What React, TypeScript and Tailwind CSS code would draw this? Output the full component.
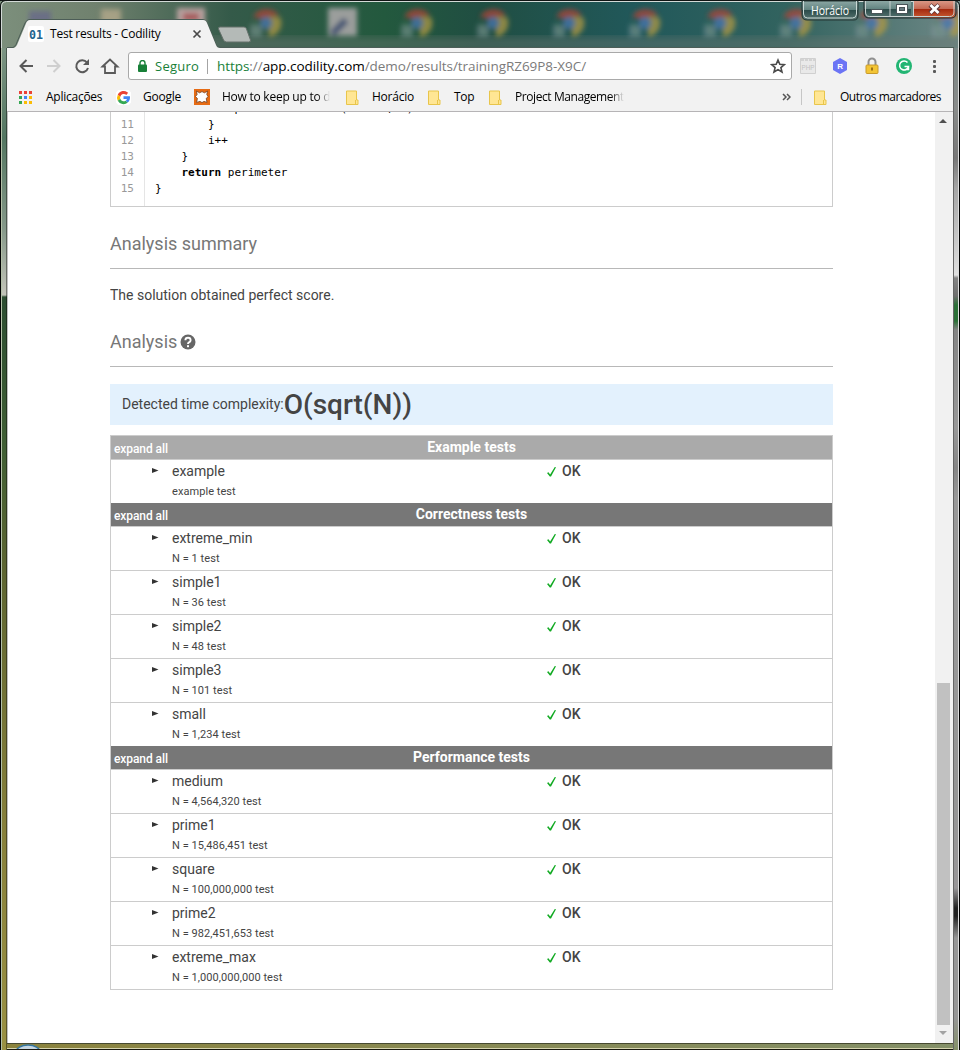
import React from 'react';

type Test = { name: string; info: string };
type Group = { title: string; tone: string; tests: Test[] };

const groups: Group[] = [
  { title: 'Example tests', tone: 'bg-[#aaaaaa]', tests: [{ name: 'example', info: 'example test' }] },
  {
    title: 'Correctness tests',
    tone: 'bg-[#777777]',
    tests: [
      { name: 'extreme_min', info: 'N = 1 test' },
      { name: 'simple1', info: 'N = 36 test' },
      { name: 'simple2', info: 'N = 48 test' },
      { name: 'simple3', info: 'N = 101 test' },
      { name: 'small', info: 'N = 1,234 test' },
    ],
  },
  {
    title: 'Performance tests',
    tone: 'bg-[#777777]',
    tests: [
      { name: 'medium', info: 'N = 4,564,320 test' },
      { name: 'prime1', info: 'N = 15,486,451 test' },
      { name: 'square', info: 'N = 100,000,000 test' },
      { name: 'prime2', info: 'N = 982,451,653 test' },
      { name: 'extreme_max', info: 'N = 1,000,000,000 test' },
    ],
  },
];

const code: [number, React.ReactNode][] = [
  [10, '            perimeter = calc(number, i)'],
  [11, '        }'],
  [12, '        i++'],
  [13, '    }'],
  [14, <>{'    '}<b>return</b> perimeter</>],
  [15, '}'],
];

function Wallpaper() {
  const chromes = [266, 417, 493, 569, 645, 720, 796, 872, 948];
  return (
    <svg className="absolute inset-0" width="960" height="48" viewBox="0 0 960 48">
      <defs>
        <filter id="soft" x="-50%" y="-50%" width="200%" height="200%"><feGaussianBlur stdDeviation="2.8" /></filter>
        <filter id="wide"><feGaussianBlur stdDeviation="5" /></filter>
        <linearGradient id="desk" x1="0" x2="1">
          <stop offset="0" stopColor="#7c8f7c" /><stop offset=".1" stopColor="#70816e" />
          <stop offset=".24" stopColor="#345a49" /><stop offset=".4" stopColor="#23593e" />
          <stop offset=".5" stopColor="#204e42" /><stop offset=".66" stopColor="#21585a" />
          <stop offset=".82" stopColor="#32635f" /><stop offset="1" stopColor="#6e8886" />
        </linearGradient>
      </defs>
      <rect width="960" height="48" fill="url(#desk)" />
      <rect x="180" y="37" width="780" height="14" fill="#6b7771" opacity=".5" filter="url(#wide)" />
      <g filter="url(#soft)">
        <rect x="29" y="11" width="22" height="20" fill="#625d90" opacity=".6" />
        <rect x="101" y="9" width="20" height="22" fill="#b5aa8c" opacity=".8" />
        <rect x="177" y="8" width="28" height="24" fill="#b9a3a0" />
        <rect x="183" y="13" width="16" height="8" fill="#a65b5b" />
        <rect x="328" y="8" width="29" height="28" fill="#9b9e9c" />
        <path d="M332 34l14-14" stroke="#4a5874" strokeWidth="7" />
        {chromes.map((x) => (
          <g key={x} opacity=".75">
            <path d={`M${x - 13} 17a15 14 0 0 1 26-2L${x} 20z`} fill="#ad4436" />
            <path d={`M${x + 2} 17h12a14 14 0 0 1-11 20z`} fill="#b09a43" />
            <path d={`M${x - 13} 20l8 15l-7 1z`} fill="#397b50" />
            <rect x={x - 16} y="25" width="12" height="12" fill="#8f9da5" opacity=".6" />
            <circle cx={x} cy="23" r="6" fill="#4977b2" />
          </g>
        ))}
      </g>
    </svg>
  );
}

function WindowButtons() {
  return (
    <svg className="absolute left-[800px] top-0" width="160" height="24" viewBox="0 0 160 24">
      <defs>
        <linearGradient id="glass" x2="0" y2="1"><stop stopColor="#8ba6a3" /><stop offset=".48" stopColor="#618380" /><stop offset=".5" stopColor="#2d4d4b" /><stop offset="1" stopColor="#577471" /></linearGradient>
        <linearGradient id="close" x2="0" y2="1"><stop stopColor="#d99785" /><stop offset=".48" stopColor="#c46751" /><stop offset=".5" stopColor="#a52b10" /><stop offset="1" stopColor="#c85c34" /></linearGradient>
      </defs>
      <path d="M2 1v14q0 5 5 5h47q4 0 4-5V1z" fill="url(#glass)" stroke="#243634" />
      <path d="M3.500 1v13q0 4 4 4h45q4 0 4-4V1" fill="none" stroke="#c9d8d5" />
      <path d="M64 1v12q0 5 5 5h42V1z" fill="url(#glass)" />
      <path d="M114 1v17h36q5 0 5-5V1z" fill="url(#close)" />
      <path d="M64 1v12q0 5 5 5h82q5 0 5-5V1" fill="none" stroke="#202d2e" />
      <path d="M65.500 1v11q0 4.500 4 4.500h80q4.500 0 4.500-4.500V1M90 1v16M113.500 1v16" fill="none" stroke="#c8d1d0" />
      <rect x="71.500" y="9.500" width="11" height="4" fill="#fff" stroke="#4a5559" />
      <rect x="96.500" y="4.500" width="11" height="9" fill="#fff" stroke="#4a5559" />
      <rect x="99.500" y="7.500" width="5" height="3" fill="#687b80" stroke="#4a5559" />
      <path d="M130 5l9 8M139 5l-9 8" stroke="#5b3538" strokeWidth="4.500" />
      <path d="M130.500 5l8 8M138.500 5l-8 8" stroke="#fff" strokeWidth="2.800" />
      <text x="11" y="15" fill="#fff" fontFamily="Open Sans" fontSize="12" textLength="38" lengthAdjust="spacingAndGlyphs">Horácio</text>
    </svg>
  );
}

function TabStrip() {
  return (
    <header className="relative h-12 shrink-0">
      <Wallpaper />
      <svg className="absolute inset-0" width="960" height="48" viewBox="0 0 960 48">
        <path d="M0 0h960v1H0z" fill="#101514" /><path d="M.5 48V6q0-5 5-5.500H954q5.500.5 5.500 5.500v42" fill="none" stroke="#101514" /><path d="M1.500 48V7q0-5 5-5.500H953q5 .5 5.500 5V48" fill="none" stroke="#d3dad7" />
        <path d="M7 47.500h6q2-1 3-3L25 23q2-3.500 4-3.500h174q3 0 4 3l9 22q1.500 3 4 3h734" fill="none" stroke="#4c5d57" />
        <path d="M7 48h7q2-1 3-3l9-21.500q1-3.500 4-3.500h173q3 0 4 3l9 22q1 3 4 3z" fill="#f2f2f2" />
        <path d="M220 27h24q2 0 2.500 2l4 11q.5 2-2 2h-22q-2 0-3-2l-5-11q-.5-2 1.500-2z" fill="#b4bab7" stroke="#65716b" />
      </svg>
      <div className="relative flex h-12 items-start pt-[26px] pl-[28px] font-['Open_Sans',sans-serif] text-[12px]">
        <svg width="16" height="16" viewBox="0 0 16 16" className="shrink-0"><rect width="16" height="16" rx="2" fill="#fff" /><text x="1" y="13" fontSize="13" fontFamily="DejaVu Sans Mono" fontWeight="bold" fill="#21638d" textLength="14" lengthAdjust="spacingAndGlyphs">01</text></svg>
        <span className="ml-[6px] w-[136px] text-[12px] leading-4 tracking-[-0.23px] whitespace-nowrap text-black">Test results - Codility</span>
        <svg className="ml-[6px] mt-[3px]" width="10" height="10" viewBox="0 0 10 10"><path d="M1.500 1.500l7 7M8.500 1.500l-7 7" stroke="#4a4a4a" strokeWidth="1.700" /></svg>
      </div>
      <WindowButtons />
    </header>
  );
}

const Folder = () => (
  <svg className="shrink-0" width="13" height="15" viewBox="0 0 13 15"><path d="M.5 1h10v9h1.500v4.500H.5z" fill="#ffe694" stroke="#e8c54b" /><path d="M9.500 14V10" stroke="#e8c54b" /></svg>
);

const GoogleMark = () => (
  <svg width="15" height="15" viewBox="3 3 42 42" className="shrink-0">
    <circle cx="24" cy="24" r="25" fill="#fff" />
    <path fill="#ea4335" d="M8 16a18 18 0 0 1 29-5l-5 6a10 10 0 0 0-17 5z" /><path fill="#fbbc05" d="M8 16l7 5.500a10 10 0 0 0 0 6L8 33a19 19 0 0 1 0-17z" />
    <path fill="#34a853" d="M8 33l7-5.500a10 10 0 0 0 15 5.500l6 5A18 18 0 0 1 8 33z" /><path fill="#4285f4" d="M24 20.500h18q1.500 11-6 17.500l-6-5q3-2 3.500-5H24z" />
  </svg>
);

function Toolbar() {
  return (
    <div className="flex h-[36px] shrink-0 items-center bg-[#f2f2f2] font-['Open_Sans',sans-serif]">
      <svg className="shrink-0" width="120" height="36" viewBox="0 0 120 36" fill="none" strokeWidth="2">
        <path d="M26 18H13.500M19.500 12l-6 6 6 6" stroke="#5a5a5a" />
        <path d="M40 18h12.500M46.500 12l6 6-6 6" stroke="#cfcfcf" />
        <path d="M80 14.500a6 6 0 1 0 1 5.500" stroke="#5a5a5a" /><path d="M82 11v6h-6z" fill="#5a5a5a" />
        <path d="M95.500 18.500L103 11.500l7.500 7H108V25H98v-6.500z" stroke="#5a5a5a" strokeWidth="1.800" />
      </svg>
      <div className="ml-px flex h-[28px] w-[664px] shrink-0 items-center rounded-[3px] border border-[#a9a9a9] bg-white">
        <svg className="ml-[9px]" width="9" height="12" viewBox="0 0 9 12"><path d="M2 5V3a2.500 2.500 0 0 1 5 0v2" stroke="#188038" strokeWidth="1.400" fill="none" /><rect y="4.500" width="9" height="7.500" rx="1" fill="#188038" /></svg>
        <span className="ml-[8px] w-[52px] pt-px text-[13px] tracking-[0.25px] text-[#188038]">Seguro</span>
        <span className="mr-[9px] h-[15px] w-px bg-[#a4a4a4]" />
        <span className="w-[550px] text-[13.5px] tracking-[-0.05px] whitespace-nowrap text-[#7b7b7b]"><span className="text-[#188038]">https</span>://<span className="text-black">app.codility.com</span>/demo/results/trainingRZ69P8-X9C/</span>
        <svg className="ml-[3px] shrink-0" width="16" height="16" viewBox="0 0 16 16"><path d="M8 2l1.800 4.200 4.600.4-3.500 3 1.100 4.400L8 11.600 4 14l1.100-4.400-3.500-3 4.600-.4z" fill="none" stroke="#4a4a4a" strokeWidth="1.600" /></svg>
      </div>
      <svg className="ml-[8px] shrink-0" width="145" height="24" viewBox="0 0 145 24">
        <path d="M.5 4.500h15v15H.5z" fill="#e9e9e9" stroke="#d0d0d0" /><path d="M1 6h14" stroke="#bcbcbc" strokeDasharray="3 1" /><text x="1.500" y="16" fontSize="7" fontFamily="Liberation Sans" fill="#c2c2c2" textLength="13" lengthAdjust="spacingAndGlyphs">PHP</text>
        <path d="M40 4l7 4v8l-7 4-7-4V8z" fill="#6b74f5" /><text x="37.200" y="15.200" fontSize="8" fontFamily="Liberation Sans" fontWeight="bold" fill="#fff">R</text>
        <path d="M68.500 12V8a3.500 3.500 0 0 1 7 0v4" fill="none" stroke="#909090" strokeWidth="2" /><rect x="66" y="11" width="12" height="8.500" rx="1" fill="#f3c535" stroke="#c99a2c" /><path d="M72 13.500v3" stroke="#80550b" strokeWidth="1.500" />
        <circle cx="104" cy="12" r="8" fill="#22b573" /><path d="M107.500 8.500a4.500 4.500 0 1 0 1 4h-4M106 15.500h2.500V12" stroke="#fff" strokeWidth="1.500" fill="none" />
        <g fill="#5a5a5a"><rect x="133" y="6" width="3" height="3" rx="1" /><rect x="133" y="11" width="3" height="3" rx="1" /><rect x="133" y="16" width="3" height="3" rx="1" /></g>
      </svg>
    </div>
  );
}

function Bookmarks() {
  const colors = ['#ea4335', '#ea4335', '#ea4335', '#34a853', '#4285f4', '#fbbc05', '#34a853', '#fbbc05', '#fbbc05'];
  return (
    <nav className="flex h-[28px] shrink-0 items-center border-b border-[#b6b4b6] bg-[#f2f2f2] pb-px pl-3 font-['Open_Sans',sans-serif] text-[12px] tracking-[-0.25px] whitespace-nowrap text-black">
      <span className="grid w-[13px] grid-cols-3 gap-[2px]">{colors.map((c, i) => <i key={i} className="size-[3px]" style={{ backgroundColor: c }} />)}</span>
      <span className="ml-[14px] w-[70px]">Aplicações</span>
      <GoogleMark /><span className="ml-[12px] w-[51px]">Google</span>
      <svg className="shrink-0" width="16" height="16" viewBox="0 0 16 16"><rect width="16" height="16" fill="#e66b14" /><path d="M2.500 2l3 1.800L8 2.600l2.500 1.200 3-1.800-.7 3.600 1.400 2-2 1.800.8 4-3-1L8 13.600l-2-1.200-3.400 1 .8-4-2-1.800 1.700-2z" fill="#fff" stroke="#74401f" strokeWidth=".8" /></svg>
      <span className="ml-[12px] w-[108px] overflow-hidden bg-linear-to-r from-black from-88% to-transparent bg-clip-text text-transparent">How to keep up to date</span>
      <span className="ml-[16px] flex"><Folder /></span><span className="ml-[13px] w-[56px]">Horácio</span>
      <Folder /><span className="ml-[13px] w-[35px]">Top</span>
      <Folder /><span className="ml-[13px] w-[109px] overflow-hidden bg-linear-to-r from-black from-88% to-transparent bg-clip-text tracking-[-0.42px] text-transparent">Project Management</span>
      <svg className="ml-[158px] shrink-0" width="9" height="8" viewBox="0 0 9 8"><path d="M1 1l3 3-3 3M5 1l3 3-3 3" fill="none" stroke="#555" strokeWidth="1.500" /></svg>
      <span className="mr-[12px] ml-[10px] h-[16px] w-px bg-[#c6c6c6]" />
      <Folder /><span className="ml-[13px] tracking-[-0.46px]">Outros marcadores</span>
    </nav>
  );
}

function TestTable() {
  return (
    <section className="mt-[10px] border border-[#cccccc]">
      {groups.map((g) => (
        <div key={g.title}>
          <div className={`flex h-[24px] border-b border-[#cccccc] pl-[3px] text-white ${g.tone}`}>
            <span className="w-[80px] pt-[5px] text-[12px] leading-4 font-medium tracking-[-0.08px]">expand all</span>
            <h3 className="w-[555px] pt-[3px] text-center text-[14px] leading-4 font-bold">{g.title}</h3>
          </div>
          {g.tests.map((t) => (
            <div key={t.name} className="flex h-[44px] border-b border-[#cccccc] last:h-[43px] last:border-b-0">
              <svg className="mt-[8px] ml-[41px] shrink-0" width="7" height="5" viewBox="0 0 7 5"><path d="M0 0l6.500 2.500L0 5z" fill="#333" /></svg>
              <div className="ml-[13px] w-[375px]">
                <div className="pt-[3px] text-[14px] leading-4">{t.name}</div>
                <div className="pt-[6px] text-[11px] leading-[14px] tracking-[0.06px]">{t.info}</div>
              </div>
              <svg className="mt-[7px] shrink-0" width="9" height="10" viewBox="0 0 9 10"><path d="M0 6l1.500-.8 1.600 2.300L7.800 0 9 .2 4 9.500H2.800z" fill="#11aa22" /></svg>
              <b className="ml-[6px] pt-[3px] text-[14px] leading-4 font-medium">OK</b>
            </div>
          ))}
        </div>
      ))}
    </section>
  );
}

function Page() {
  return (
    <main className="ml-[102px] h-full w-[723px] overflow-hidden font-[Roboto,sans-serif] text-[#444]">
      <section className="flex h-[95px] items-end overflow-hidden border border-t-0 border-[#cccccc] font-['DejaVu_Sans_Mono',monospace] text-[11px] leading-4 text-black">
        <div className="h-[105px] w-[34px] shrink-0 border-r border-[#e5e5e5] pr-[10px] text-right text-[#999]">{code.map(([n]) => <div key={n}>{n}</div>)}</div>
        <pre className="h-[105px] pl-[10px] font-['DejaVu_Sans_Mono',monospace]">{code.map(([n, t]) => <div key={n}>{t}</div>)}</pre>
      </section>
      <h2 className="mt-[25px] h-[37px] border-b border-[#b8b8b8] text-[18px] leading-6 text-[#777]">Analysis summary</h2>
      <p className="mt-[15px] text-[14px] leading-[22px]">The solution obtained perfect score.</p>
      <h2 className="mt-[24px] flex h-[37px] items-start border-b border-[#b8b8b8] text-[18px] leading-6 text-[#777]">Analysis
        <svg className="mt-[4px] ml-[3px]" width="16" height="16" viewBox="0 0 16 16"><circle cx="8" cy="8" r="7.500" fill="#666" /><path d="M5.400 6.200Q5.400 3.800 8 3.800t2.600 2.400Q10.600 7.600 9 8.400 8 9 8 10" fill="none" stroke="#fff" strokeWidth="1.900" /><rect x="7" y="11.200" width="2" height="2" fill="#fff" /></svg>
      </h2>
      <div className="mt-[17px] flex h-[41px] items-center bg-[#e3f1fd] pl-3 text-[14px]">Detected time complexity:<span className="text-[28px] font-medium">O(sqrt(N))</span></div>
      <TestTable />
    </main>
  );
}

export default function App() {
  return (
    <div className="relative flex h-[1050px] w-[960px] flex-col overflow-hidden bg-[#101514]">
      <TabStrip />
      <div className="flex h-[1002px]">
        <div className="w-[7px] shrink-0 border-l border-black bg-[linear-gradient(#7c9483_0px,#537661_90px,#859889_180px,#c3c4b9_247px,#2c4d31_249px,#405f34_400px,#5d6531_520px,#87803b_780px,#9a9143_1002px)] shadow-[inset_1px_0_#b3c0a8,inset_-1px_0_#0006]" />
        <div className="flex w-[946px] flex-col">
          <Toolbar />
          <Bookmarks />
          <div className="flex h-[931px] border-l border-[#c0c0c0] bg-white">
            <div className="w-[927px] overflow-hidden"><Page /></div>
            <aside className="flex w-[18px] flex-col items-center bg-[#f1f1f1] pr-[2px]">
              <svg className="mt-[7px]" width="8" height="4"><path d="M0 4l4-4 4 4z" fill="#505050" /></svg>
              <div className="mt-[560px] h-[342px] w-[13px] bg-[#c1c1c1]" />
              <svg className="mt-[6px]" width="8" height="4"><path d="M0 0h8L4 4z" fill="#a3a3a3" /></svg>
            </aside>
          </div>
          <footer className="flex h-[7px] items-end border-y border-t-[#474a31] border-b-[#1b1a10] bg-linear-to-r from-[#8b833d] to-[#849068] pl-[8px] shadow-[inset_0_-1px_#d6d5b0]">
            <svg width="26" height="5" viewBox="0 0 26 5"><ellipse cx="13" cy="8" rx="12" ry="7" fill="#c6d7e2" stroke="#3576a0" strokeWidth="1.500" /></svg>
          </footer>
        </div>
        <div className="w-[7px] shrink-0 border-r border-black bg-[linear-gradient(#7b8785_0px,#8a8c8b_60px,#787878_110px,#a5a5a5_140px,#dedede_225px,#e2e2e2_227px,#858585_230px,#6f6f6f_248px,#2c7038_257px,#2c7038_273px,#858585_282px,#999_380px,#868686_420px,#999_450px,#969696_750px,#989698_840px,#222_860px,#222_868px,#969696_890px,#969696_970px,#849068_1002px)] shadow-[inset_-1px_0_#dedede,inset_1px_0_#666]" />
      </div>
    </div>
  );
}
